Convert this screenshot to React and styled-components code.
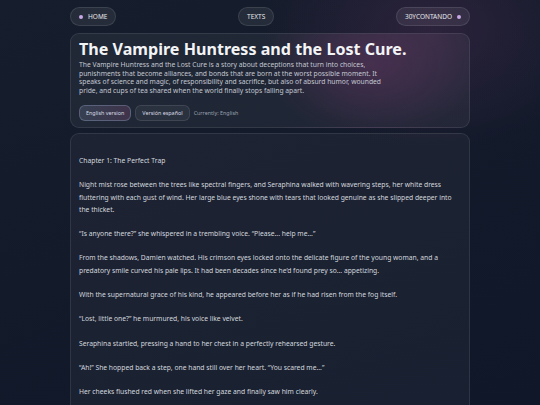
import React from "react";
import styled, { createGlobalStyle } from "styled-components";

const Global = createGlobalStyle`
  html, body { margin: 0; padding: 0; }
  body {
    background: #0f1626;
    font-family: "Noto Sans", "Open Sans", sans-serif;
    color: #e5e7eb;
  }
  * { box-sizing: border-box; }
`;

const Page = styled.div`
  height: 405px;
  overflow: hidden;
  background:
    radial-gradient(ellipse 240px 170px at 430px 30px, rgba(80, 45, 85, 0.4), transparent 70%),
    linear-gradient(160deg, #161d2c 0%, #131a2a 50%, #0f1729 100%);
  display: flex;
  flex-direction: column;
  align-items: center;
  padding-top: 7px;
`;

const Column = styled.div`
  width: 400px;
  display: flex;
  flex-direction: column;
`;

const Nav = styled.nav`
  display: flex;
  justify-content: space-between;
  align-items: center;
  height: 19px;
`;

const Pill = styled.a`
  display: inline-flex;
  align-items: center;
  gap: 5px;
  height: 19px;
  padding: 0 8px;
  border-radius: 10px;
  background: rgba(255, 255, 255, 0.07);
  border: 1px solid rgba(255, 255, 255, 0.1);
  color: #e5e7eb;
  font-size: 6.5px;
  text-decoration: none;
`;

const Dot = styled.span`
  width: 4px;
  height: 4px;
  border-radius: 50%;
  background: #c9a7e6;
`;

const Card = styled.section`
  margin-top: ${(p) => p.$mt}px;
  border-radius: 9px;
  border: 1px solid rgba(255, 255, 255, 0.09);
  background: ${(p) =>
    p.$glow
      ? "radial-gradient(ellipse 140px 100px at 300px 30px, rgba(125, 60, 115, 0.32), transparent 75%), rgba(255,255,255,0.05)"
      : "rgba(255,255,255,0.04)"};
  padding: ${(p) => p.$pad};
`;

const Title = styled.h1`
  margin: 0;
  font-size: 16.1px;
  font-weight: 700;
  line-height: 20px;
  color: #f3f4f6;
`;

const Desc = styled.p`
  margin: 2px 0 0;
  max-width: 314px;
  font-size: 6.75px;
  line-height: 8.5px;
  color: #c3c8d2;
`;

const LangRow = styled.div`
  display: flex;
  align-items: center;
  gap: 4px;
  margin-top: 10px;
`;

const LangBtn = styled.button`
  height: 16px;
  padding: 0 6px;
  border-radius: 6px;
  font-family: inherit;
  font-size: 5.4px;
  color: #d8dbe2;
  border: 1px solid ${(p) => (p.$active ? "rgba(150,170,200,0.35)" : "rgba(255,255,255,0.1)")};
  background: ${(p) =>
    p.$active
      ? "linear-gradient(90deg, rgba(70,82,102,0.6), rgba(85,60,90,0.6))"
      : "rgba(255,255,255,0.05)"};
`;

const Current = styled.span`
  font-size: 5.4px;
  color: #9aa1ad;
`;

const Para = styled.p`
  margin: 0 0 12px;
  font-size: 6.75px;
  line-height: 12.3px;
  color: #d3d7de;
`;

const paragraphs = [
  "Chapter 1: The Perfect Trap",
  "Night mist rose between the trees like spectral fingers, and Seraphina walked with wavering steps, her white dress fluttering with each gust of wind. Her large blue eyes shone with tears that looked genuine as she slipped deeper into the thicket.",
  "“Is anyone there?” she whispered in a trembling voice. “Please... help me...”",
  "From the shadows, Damien watched. His crimson eyes locked onto the delicate figure of the young woman, and a predatory smile curved his pale lips. It had been decades since he’d found prey so... appetizing.",
  "With the supernatural grace of his kind, he appeared before her as if he had risen from the fog itself.",
  "“Lost, little one?” he murmured, his voice like velvet.",
  "Seraphina startled, pressing a hand to her chest in a perfectly rehearsed gesture.",
  "“Ah!” She hopped back a step, one hand still over her heart. “You scared me...”",
  "Her cheeks flushed red when she lifted her gaze and finally saw him clearly.",
];

export default function App() {
  return (
    <>
      <Global />
      <Page>
        <Column>
          <Nav>
            <Pill href="#"><Dot />HOME</Pill>
            <Pill href="#">TEXTS</Pill>
            <Pill href="#">30YCONTANDO<Dot /></Pill>
          </Nav>
          <Card $mt={7} $glow $pad="5px 8px 6px">
            <Title>The Vampire Huntress and the Lost Cure.</Title>
            <Desc>
              The Vampire Huntress and the Lost Cure is a story about deceptions that turn into choices,
              punishments that become alliances, and bonds that are born at the worst possible moment. It
              speaks of science and magic, of responsibility and sacrifice, but also of absurd humor, wounded
              pride, and cups of tea shared when the world finally stops falling apart.
            </Desc>
            <LangRow>
              <LangBtn $active>English version</LangBtn>
              <LangBtn>Versión español</LangBtn>
              <Current>Currently: English</Current>
            </LangRow>
          </Card>
          <Card $mt={5} $pad="21px 8px 40px">
            {paragraphs.map((t, i) => (
              <Para key={i}>{t}</Para>
            ))}
          </Card>
        </Column>
      </Page>
    </>
  );
}
